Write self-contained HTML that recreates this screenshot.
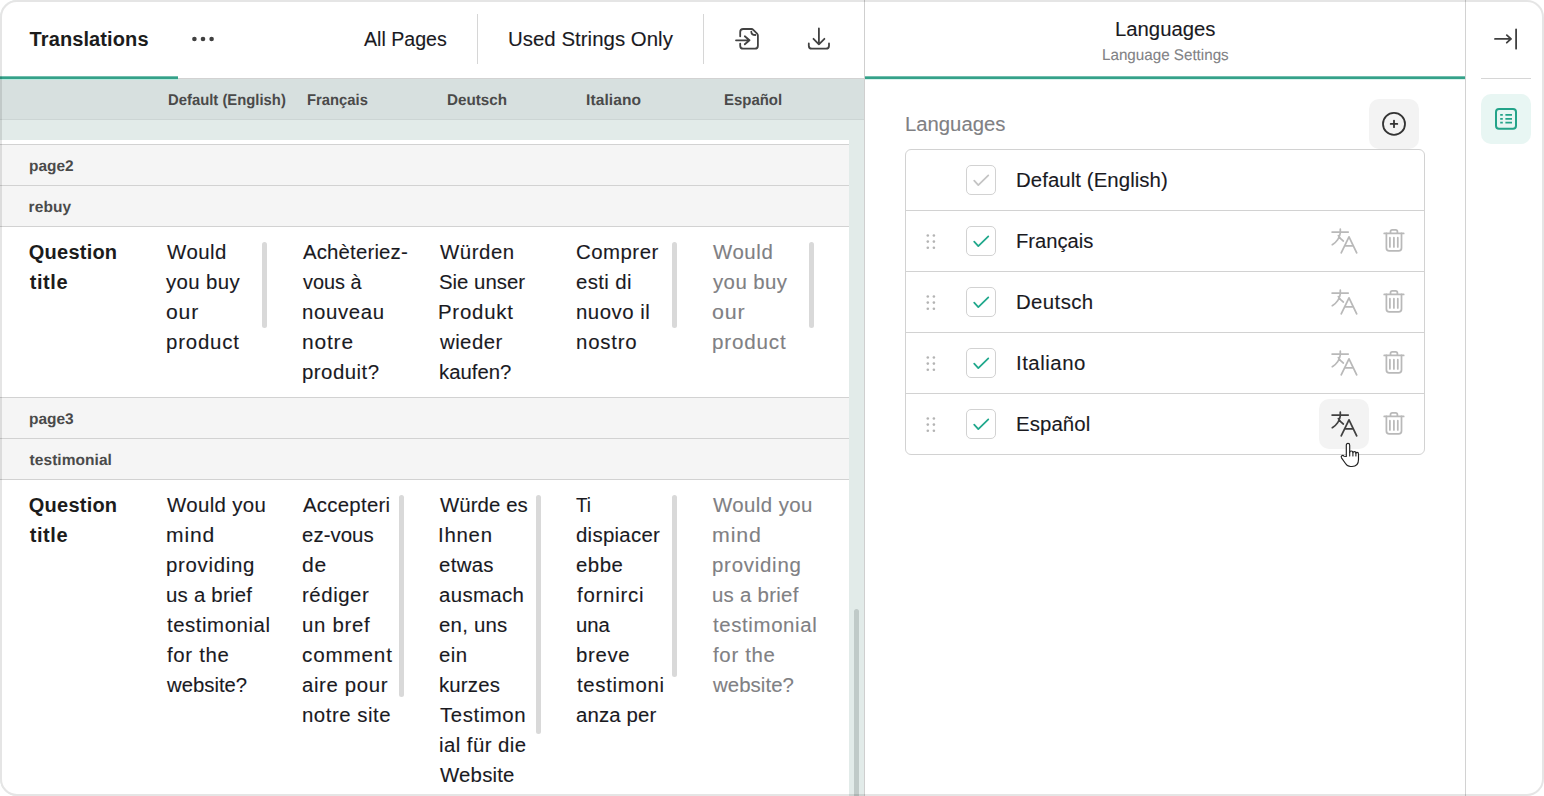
<!DOCTYPE html>
<html lang="en">
<head>
<meta charset="utf-8">
<title>Translations</title>
<style>
*{box-sizing:border-box;margin:0;padding:0}
html,body{width:1544px;height:796px;overflow:hidden;background:#fff}
body{font-family:"Liberation Sans",sans-serif;color:#1a1a1f;font-size:20px;line-height:30px}
#app{position:absolute;left:0;top:0;width:1544px;height:796px;border-radius:17px;overflow:hidden;background:#fff}
#frame{position:absolute;left:0;top:0;width:1544px;height:796px;border:2px solid rgba(0,0,0,.1);border-radius:17px;z-index:50;pointer-events:none}
.abs{position:absolute}
svg{position:absolute;overflow:visible}
/* text cells: every line is a span */
.c{position:absolute;white-space:nowrap}
.c .l{display:block;transform-origin:0 50%}
.s20{font-size:20px;line-height:30px;-webkit-text-stroke:.12px}
.s20 .l{height:30px}
.s15{font-size:15.5px;line-height:20px;-webkit-text-stroke:.1px;text-rendering:geometricPrecision}
.s15 .l{height:20px}
.sbd{font-weight:bold;color:#1c1c1c;-webkit-text-stroke:0}
.th{font-weight:bold;color:#4a4a4a;-webkit-text-stroke:0}
.ph{color:#808083}
.sub{color:#828285}
/* left panel */
#left{position:absolute;left:0;top:0;width:864px;height:796px;background:#e2ebe9;overflow:hidden}
#lhead{position:absolute;left:0;top:0;width:864px;height:78px;background:#fff}
#hline{position:absolute;left:0;top:78px;width:864px;height:1px;background:#d2d2d2}
.tabline{position:absolute;top:76px;height:3px;background:#35a189;border-top:1px solid #72bfae;z-index:3}
.tabfringe{position:absolute;top:79px;height:1px;background:#b9eadf;z-index:3}
.vsep{position:absolute;top:14px;width:1px;height:50px;background:#d6d6d6}
#thead{position:absolute;left:0;top:79px;width:864px;height:41px;background:#d7e0df;border-bottom:1px solid #ccd5d4}
#tbody{position:absolute;left:0;top:140px;width:849px;height:660px;background:#fff}
.grp{position:absolute;left:0;width:849px;height:41px;background:#f5f5f5;border-top:1px solid #d2d2d2}
.rowline{position:absolute;left:0;width:849px;height:1px;background:#d2d2d2}
.sb{position:absolute;width:5px;border-radius:2.5px;background:#d9d9d9}
#mainsb{position:absolute;left:854px;top:609px;width:5px;height:200px;background:#c0cac8;border-radius:2.5px}
#vdiv1{position:absolute;left:864px;top:0;width:1px;height:796px;background:#cfcfcf}
/* right panel */
#right{position:absolute;left:865px;top:0;width:600px;height:796px;background:#fff}
#vdiv2{position:absolute;left:1465px;top:0;width:1px;height:796px;background:#d2d2d2}
#list{position:absolute;left:905px;top:149px;width:520px;height:306px;border:1px solid #d2d2d2;border-radius:6px;background:#fff}
.li{position:absolute;left:0;width:518px;height:61px}
.li + .li{border-top:1px solid #d2d2d2}
.cb{position:absolute;left:60px;width:30px;height:30px;border:1px solid #d2d2d2;border-radius:5px;background:#fff}
.btn{position:absolute;width:50px;height:50px;border-radius:10px;background:#f3f3f3}
</style>
</head>
<body>
<div id="app">
  <div id="left">
    <div id="lhead">
      <div class="c s20 sbd" style="left:28px;top:24px"><span class="l" style="margin-left:1.6px;letter-spacing:0.1px;transform:scaleX(1)">Translations</span></div>
      <div class="c s20" style="left:363px;top:24px"><span class="l" style="margin-left:1.1px;transform:scaleX(0.98)">All Pages</span></div>
      <div class="c s20" style="left:508px;top:24px"><span class="l" style="margin-left:-0.02px;letter-spacing:0.03px;transform:scaleX(1.02)">Used Strings Only</span></div>
      <svg style="left:191px;top:34px" width="24" height="10" viewBox="0 0 24 10"><circle cx="3.4" cy="5" r="2.3" fill="#404040"/><circle cx="12" cy="5" r="2.3" fill="#404040"/><circle cx="20.6" cy="5" r="2.3" fill="#404040"/></svg>
      <div class="vsep" style="left:477px"></div>
      <div class="vsep" style="left:703px"></div>
      <svg style="left:0;top:0" width="864" height="78" viewBox="0 0 864 78" fill="none" stroke="#424242" stroke-width="1.800" stroke-linecap="round" stroke-linejoin="round">
        <path d="M740.200 36.300V32Q740.200 29 743.200 29H751.500Q752.500 29 753.300 29.800L757.100 33.600Q757.900 34.400 757.900 35.500V45.700Q757.900 48.700 754.900 48.700H743.200Q740.200 48.700 740.200 45.700V43.600"/>
        <path d="M751.300 31.700Q751.300 35 755.400 35"/>
        <path d="M736 40.300H749.500M744.800 36.300L749.500 40.300L744.800 44.300"/>
        <path d="M818.900 28.500V44.300M813.500 38.800L818.900 44.300L824.400 38.800"/>
        <path d="M808.800 43.500V45.700Q808.800 48.700 811.800 48.700H826Q829 48.700 829 45.700V43.500"/>
      </svg>
    </div>
    <div id="hline"></div>
    <div class="tabline" style="left:0;width:178px"></div>
    <div class="tabfringe" style="left:0;width:178px"></div>
    <div id="thead">
      <div class="c s15 th" style="left:168px;top:12px"><span class="l" style="margin-left:0.34px;transform:scaleX(0.957)">Default (English)</span></div>
      <div class="c s15 th" style="left:307px;top:12px"><span class="l" style="margin-left:0.05px;transform:scaleX(0.955)">Français</span></div>
      <div class="c s15 th" style="left:446px;top:12px"><span class="l" style="margin-left:0.52px;transform:scaleX(0.981)">Deutsch</span></div>
      <div class="c s15 th" style="left:585px;top:12px"><span class="l" style="margin-left:0.5px;letter-spacing:0.11px;transform:scaleX(1.001)">Italiano</span></div>
      <div class="c s15 th" style="left:724px;top:12px"><span class="l" style="margin-left:0.34px;transform:scaleX(0.964)">Español</span></div>
    </div>
    <div id="tbody">
      <div class="grp" style="top:4px"></div>
      <div class="grp" style="top:45px"></div>
      <div class="rowline" style="top:86px"></div>
      <div class="c s15 th" style="left:28px;top:17px"><span class="l" style="margin-left:0.6px;transform:scaleX(0.995)">page2</span></div>
      <div class="c s15 th" style="left:28px;top:58px"><span class="l" style="margin-left:0.6px;letter-spacing:0.1px;transform:scaleX(1)">rebuy</span></div>
      <div class="c s20 sbd" style="left:28px;top:97px"><span class="l" style="margin-left:0.8px;letter-spacing:0.23px;transform:scaleX(1)">Question</span><span class="l" style="margin-left:1.8px;letter-spacing:0.55px;transform:scaleX(1)">title</span></div>
      <div class="c s20" style="left:165px;top:97px"><span class="l" style="margin-left:1.6px;letter-spacing:0.49px;transform:scaleX(1.02)">Would</span><span class="l" style="margin-left:1.2px;letter-spacing:0.36px;transform:scaleX(1.02)">you buy</span><span class="l" style="margin-left:0.54px;letter-spacing:0.8px;transform:scaleX(1.057)">our</span><span class="l" style="margin-left:0.78px;letter-spacing:0.8px;transform:scaleX(1.02)">product</span></div>
      <div class="c s20" style="left:301px;top:97px"><span class="l" style="margin-left:1.7px;letter-spacing:0.15px;transform:scaleX(1.02)">Achèteriez-</span><span class="l" style="margin-left:1.9px;transform:scaleX(0.993)">vous à</span><span class="l" style="margin-left:1.28px;letter-spacing:0.61px;transform:scaleX(1.02)">nouveau</span><span class="l" style="margin-left:1.25px;letter-spacing:0.8px;transform:scaleX(1.047)">notre</span><span class="l" style="margin-left:1.28px;letter-spacing:0.47px;transform:scaleX(1.02)">produit?</span></div>
      <div class="c s20" style="left:438px;top:97px"><span class="l" style="margin-left:1.9px;letter-spacing:0.53px;transform:scaleX(1.02)">Würden</span><span class="l" style="margin-left:0.88px;transform:scaleX(1.019)">Sie unser</span><span class="l" style="margin-left:0.46px;letter-spacing:0.75px;transform:scaleX(1.02)">Produkt</span><span class="l" style="margin-left:1.7px;letter-spacing:0.42px;transform:scaleX(1.02)">wieder</span><span class="l" style="margin-left:1.28px;transform:scaleX(1.016)">kaufen?</span></div>
      <div class="c s20" style="left:575px;top:97px"><span class="l" style="margin-left:0.78px;letter-spacing:0.48px;transform:scaleX(1.02)">Comprer</span><span class="l" style="margin-left:0.78px;letter-spacing:0.36px;transform:scaleX(1.02)">esti di</span><span class="l" style="margin-left:1.08px;letter-spacing:0.48px;transform:scaleX(1.02)">nuovo il</span><span class="l" style="margin-left:1.08px;letter-spacing:0.77px;transform:scaleX(1.02)">nostro</span></div>
      <div class="c s20 ph" style="left:711px;top:97px"><span class="l" style="margin-left:1.9px;letter-spacing:0.56px;transform:scaleX(1.02)">Would</span><span class="l" style="margin-left:1.5px;letter-spacing:0.41px;transform:scaleX(1.02)">you buy</span><span class="l" style="margin-left:0.93px;letter-spacing:0.8px;transform:scaleX(1.071)">our</span><span class="l" style="margin-left:1.07px;letter-spacing:0.8px;transform:scaleX(1.03)">product</span></div>
      <div class="sb" style="left:262px;top:102px;height:86px"></div>
      <div class="sb" style="left:672px;top:102px;height:86px"></div>
      <div class="sb" style="left:809px;top:102px;height:86px"></div>
      <div class="grp" style="top:257px"></div>
      <div class="grp" style="top:298px"></div>
      <div class="rowline" style="top:339px"></div>
      <div class="c s15 th" style="left:28px;top:270px"><span class="l" style="margin-left:0.6px;transform:scaleX(0.998)">page3</span></div>
      <div class="c s15 th" style="left:28px;top:311px"><span class="l" style="margin-left:1.6px;letter-spacing:0.05px;transform:scaleX(1)">testimonial</span></div>
      <div class="c s20 sbd" style="left:28px;top:350px"><span class="l" style="margin-left:0.8px;letter-spacing:0.23px;transform:scaleX(1)">Question</span><span class="l" style="margin-left:1.8px;letter-spacing:0.55px;transform:scaleX(1)">title</span></div>
      <div class="c s20" style="left:165px;top:350px"><span class="l" style="margin-left:1.6px;letter-spacing:0.35px;transform:scaleX(1.02)">Would you</span><span class="l" style="margin-left:0.85px;letter-spacing:0.8px;transform:scaleX(1.053)">mind</span><span class="l" style="margin-left:0.88px;letter-spacing:0.69px;transform:scaleX(1.02)">providing</span><span class="l" style="margin-left:0.88px;letter-spacing:0.22px;transform:scaleX(1.02)">us a brief</span><span class="l" style="margin-left:1.5px;letter-spacing:0.53px;transform:scaleX(1.02)">testimonial</span><span class="l" style="margin-left:1.6px;letter-spacing:0.65px;transform:scaleX(1.02)">for the</span><span class="l" style="margin-left:1.5px;transform:scaleX(1.015)">website?</span></div>
      <div class="c s20" style="left:301px;top:350px"><span class="l" style="margin-left:1.7px;letter-spacing:0.25px;transform:scaleX(1.02)">Accepteri</span><span class="l" style="margin-left:1.28px;letter-spacing:0.04px;transform:scaleX(1.02)">ez-vous</span><span class="l" style="margin-left:1.24px;letter-spacing:0.8px;transform:scaleX(1.058)">de</span><span class="l" style="margin-left:1.28px;letter-spacing:0.54px;transform:scaleX(1.02)">rédiger</span><span class="l" style="margin-left:1.28px;letter-spacing:0.68px;transform:scaleX(1.02)">un bref</span><span class="l" style="margin-left:0.67px;letter-spacing:0.8px;transform:scaleX(1.033)">comment</span><span class="l" style="margin-left:0.88px;letter-spacing:0.61px;transform:scaleX(1.02)">aire pour</span><span class="l" style="margin-left:1.28px;letter-spacing:0.5px;transform:scaleX(1.02)">notre site</span></div>
      <div class="c s20" style="left:438px;top:350px"><span class="l" style="margin-left:1.9px;letter-spacing:0.07px;transform:scaleX(1.02)">Würde es</span><span class="l" style="margin-left:0.46px;letter-spacing:0.73px;transform:scaleX(1.02)">Ihnen</span><span class="l" style="margin-left:0.88px;letter-spacing:0.31px;transform:scaleX(1.02)">etwas</span><span class="l" style="margin-left:0.88px;letter-spacing:0.35px;transform:scaleX(1.02)">ausmach</span><span class="l" style="margin-left:0.88px;letter-spacing:0.22px;transform:scaleX(1.02)">en, uns</span><span class="l" style="margin-left:0.88px;letter-spacing:0.44px;transform:scaleX(1.02)">ein</span><span class="l" style="margin-left:1.28px;letter-spacing:0.15px;transform:scaleX(1.02)">kurzes</span><span class="l" style="margin-left:1.9px;letter-spacing:0.56px;transform:scaleX(1.02)">Testimon</span><span class="l" style="margin-left:1.08px;letter-spacing:0.43px;transform:scaleX(1.02)">ial für die</span><span class="l" style="margin-left:1.9px;letter-spacing:0.18px;transform:scaleX(1.02)">Website</span></div>
      <div class="c s20" style="left:575px;top:350px"><span class="l" style="margin-left:1.4px;transform:scaleX(0.94)">Ti</span><span class="l" style="margin-left:0.78px;letter-spacing:0.27px;transform:scaleX(1.02)">dispiacer</span><span class="l" style="margin-left:0.78px;letter-spacing:0.5px;transform:scaleX(1.02)">ebbe</span><span class="l" style="margin-left:1.6px;letter-spacing:0.73px;transform:scaleX(1.02)">fornirci</span><span class="l" style="margin-left:0.98px;transform:scaleX(1.015)">una</span><span class="l" style="margin-left:0.58px;letter-spacing:0.65px;transform:scaleX(1.02)">breve</span><span class="l" style="margin-left:1.8px;letter-spacing:0.66px;transform:scaleX(1.02)">testimoni</span><span class="l" style="margin-left:0.58px;letter-spacing:0.11px;transform:scaleX(1.02)">anza per</span></div>
      <div class="c s20 ph" style="left:711px;top:350px"><span class="l" style="margin-left:1.9px;letter-spacing:0.41px;transform:scaleX(1.02)">Would you</span><span class="l" style="margin-left:1.03px;letter-spacing:0.8px;transform:scaleX(1.067)">mind</span><span class="l" style="margin-left:1.08px;letter-spacing:0.74px;transform:scaleX(1.02)">providing</span><span class="l" style="margin-left:1.08px;letter-spacing:0.26px;transform:scaleX(1.02)">us a brief</span><span class="l" style="margin-left:1.7px;letter-spacing:0.61px;transform:scaleX(1.02)">testimonial</span><span class="l" style="margin-left:2.2px;letter-spacing:0.67px;transform:scaleX(1.02)">for the</span><span class="l" style="margin-left:2px;letter-spacing:0.05px;transform:scaleX(1.02)">website?</span></div>
      <div class="sb" style="left:399px;top:355px;height:202px"></div>
      <div class="sb" style="left:536px;top:355px;height:239px"></div>
      <div class="sb" style="left:672px;top:355px;height:182px"></div>
    </div>
    <div id="mainsb"></div>
  </div>
  <div id="vdiv1"></div>
  <div id="right"></div>
  <div class="tabline" style="left:865px;width:600px"></div>
  <div class="tabfringe" style="left:865px;width:600px;background:#d9f3ed"></div>
  <div class="c s20" style="left:1115px;top:14px"><span class="l" style="margin-left:-0.23px;transform:scaleX(1.015)">Languages</span></div>
  <div class="c s15 sub" style="left:1101px;top:46px"><span class="l" style="margin-left:0.62px;transform:scaleX(0.98)">Language Settings</span></div>
  <div class="c s20 ph" style="left:905px;top:109px"><span class="l" style="margin-left:-0.23px;transform:scaleX(1.014)">Languages</span></div>
  <div class="btn" style="left:1369px;top:99px"></div>
  <div id="list">
    <div class="li" style="top:0"><div class="cb" style="top:15px"></div></div>
    <div class="li" style="top:60px"><div class="cb" style="top:15px"></div></div>
    <div class="li" style="top:121px"><div class="cb" style="top:15px"></div></div>
    <div class="li" style="top:182px"><div class="cb" style="top:15px"></div></div>
    <div class="li" style="top:243px"><div class="cb" style="top:15px"></div></div>
  </div>
  <div class="c s20" style="left:1016px;top:165px"><span class="l" style="margin-left:-0.34px;letter-spacing:0.06px;transform:scaleX(1.02)">Default (English)</span></div>
  <div class="c s20" style="left:1016px;top:226px"><span class="l" style="margin-left:-0.32px;transform:scaleX(1.009)">Français</span></div>
  <div class="c s20" style="left:1016px;top:287px"><span class="l" style="margin-left:-0.34px;letter-spacing:0.38px;transform:scaleX(1.02)">Deutsch</span></div>
  <div class="c s20" style="left:1016px;top:348px"><span class="l" style="margin-left:-0.34px;letter-spacing:0.5px;transform:scaleX(1.02)">Italiano</span></div>
  <div class="c s20" style="left:1016px;top:409px"><span class="l" style="margin-left:-0.34px;letter-spacing:0.08px;transform:scaleX(1.02)">Español</span></div>
  <div class="btn" style="left:1319px;top:399px"></div>
  <svg style="left:0;top:0" width="1544" height="796" viewBox="0 0 1544 796" fill="none" stroke-width="1.750" stroke-linecap="round" stroke-linejoin="round">
    <g stroke="#333" stroke-width="1.800"><circle cx="1394" cy="123.900" r="11"/><path d="M1394 120.600V127.200M1390.700 123.900H1397.300"/></g>
    <path stroke="#c4c4c4" d="M974.200 180.7L978.300 185.1L988.300 175.4"/>
    <g fill="#b4b4b4" stroke="none"><circle cx="927.8" cy="235.5" r="1.3"/><circle cx="933.9" cy="235.5" r="1.3"/><circle cx="927.8" cy="241.6" r="1.3"/><circle cx="933.9" cy="241.6" r="1.3"/><circle cx="927.8" cy="247.7" r="1.3"/><circle cx="933.9" cy="247.7" r="1.3"/></g>
    <path stroke="#20a88c" d="M974.200 241.7L978.300 246.1L988.300 236.4"/>
    <g stroke="#b9b9b9"><path d="M1332.100 232H1348.200M1340.300 229.2V232M1340.500 232Q1339.300 240.5 1332.300 244.7M1338.400 235.6Q1340 238.6 1343.300 241"/><path d="M1341.200 252.8L1349 236.8L1356.700 252.8M1344.800 245.9H1353.200"/></g>
    <g stroke="#b9b9b9"><path d="M1384.200 233.4H1403.700M1390.500 233.4V231.6Q1390.500 229.8 1392.300 229.8H1395.600Q1397.400 229.8 1397.400 231.6V233.4"/><path d="M1386.400 233.4V248Q1386.400 250.9 1389.300 250.9H1398.600Q1401.500 250.9 1401.500 248V233.4M1389.900 237.7V246.9M1393.900 237.7V246.9M1397.800 237.7V246.9"/></g>
    <g fill="#b4b4b4" stroke="none"><circle cx="927.8" cy="296.5" r="1.3"/><circle cx="933.9" cy="296.5" r="1.3"/><circle cx="927.8" cy="302.6" r="1.3"/><circle cx="933.9" cy="302.6" r="1.3"/><circle cx="927.8" cy="308.7" r="1.3"/><circle cx="933.9" cy="308.7" r="1.3"/></g>
    <path stroke="#20a88c" d="M974.200 302.7L978.300 307.1L988.300 297.4"/>
    <g stroke="#b9b9b9"><path d="M1332.100 293H1348.200M1340.300 290.2V293M1340.500 293Q1339.300 301.5 1332.300 305.7M1338.400 296.6Q1340 299.6 1343.300 302"/><path d="M1341.200 313.8L1349 297.8L1356.700 313.8M1344.800 306.9H1353.200"/></g>
    <g stroke="#b9b9b9"><path d="M1384.200 294.4H1403.700M1390.500 294.4V292.6Q1390.500 290.8 1392.300 290.8H1395.600Q1397.400 290.8 1397.400 292.6V294.4"/><path d="M1386.400 294.4V309Q1386.400 311.9 1389.300 311.9H1398.600Q1401.500 311.9 1401.500 309V294.4M1389.900 298.7V307.9M1393.900 298.7V307.9M1397.800 298.7V307.9"/></g>
    <g fill="#b4b4b4" stroke="none"><circle cx="927.8" cy="357.5" r="1.3"/><circle cx="933.9" cy="357.5" r="1.3"/><circle cx="927.8" cy="363.6" r="1.3"/><circle cx="933.9" cy="363.6" r="1.3"/><circle cx="927.8" cy="369.7" r="1.3"/><circle cx="933.9" cy="369.7" r="1.3"/></g>
    <path stroke="#20a88c" d="M974.200 363.7L978.300 368.1L988.300 358.4"/>
    <g stroke="#b9b9b9"><path d="M1332.100 354H1348.200M1340.300 351.2V354M1340.500 354Q1339.300 362.5 1332.300 366.7M1338.400 357.6Q1340 360.6 1343.300 363"/><path d="M1341.200 374.8L1349 358.8L1356.700 374.8M1344.800 367.9H1353.200"/></g>
    <g stroke="#b9b9b9"><path d="M1384.200 355.4H1403.700M1390.500 355.4V353.6Q1390.500 351.8 1392.300 351.8H1395.600Q1397.400 351.8 1397.400 353.6V355.4"/><path d="M1386.400 355.4V370Q1386.400 372.9 1389.300 372.9H1398.600Q1401.500 372.9 1401.500 370V355.4M1389.900 359.7V368.9M1393.900 359.7V368.9M1397.800 359.7V368.9"/></g>
    <g fill="#b4b4b4" stroke="none"><circle cx="927.8" cy="418.5" r="1.3"/><circle cx="933.9" cy="418.5" r="1.3"/><circle cx="927.8" cy="424.6" r="1.3"/><circle cx="933.9" cy="424.6" r="1.3"/><circle cx="927.8" cy="430.7" r="1.3"/><circle cx="933.9" cy="430.7" r="1.3"/></g>
    <path stroke="#20a88c" d="M974.200 424.7L978.300 429.1L988.300 419.4"/>
    <g stroke="#404040"><path d="M1332.100 415H1348.200M1340.300 412.2V415M1340.500 415Q1339.300 423.5 1332.300 427.7M1338.400 418.6Q1340 421.6 1343.300 424"/><path d="M1341.200 435.8L1349 419.8L1356.700 435.8M1344.800 428.9H1353.200"/></g>
    <g stroke="#b9b9b9"><path d="M1384.200 416.4H1403.700M1390.500 416.4V414.6Q1390.500 412.8 1392.300 412.8H1395.600Q1397.400 412.8 1397.400 414.6V416.4"/><path d="M1386.400 416.4V431Q1386.400 433.9 1389.300 433.9H1398.600Q1401.500 433.9 1401.500 431V416.4M1389.900 420.7V429.9M1393.900 420.7V429.9M1397.800 420.7V429.9"/></g>
  </svg>
  <svg style="left:1340.300px;top:442px;z-index:60" width="20" height="26" viewBox="0 0 20 26" stroke-linejoin="round" stroke-linecap="round"><path d="M6.300 14.500V3.200Q6.300 1.300 8 1.300Q9.700 1.300 9.700 3.200V10.300Q9.700 9 11.300 9Q12.900 9 12.900 10.700Q12.900 9.600 14.400 9.600Q15.900 9.600 15.900 11.300Q15.900 10.400 17.200 10.400Q18.500 10.400 18.500 12.200V17.500Q18.500 24.500 12 24.500H10.500Q7.500 24.500 5.500 21.500L1.500 15.800Q0.700 14.500 1.800 13.700Q2.900 13 4 14.200Z" fill="#fff" stroke="#222" stroke-width="1.150"/><path d="M9.700 10.300V14M12.900 10.700V14M15.900 11.300V14" fill="none" stroke="#222" stroke-width="1.100"/></svg>
  <div id="vdiv2"></div>
  <div id="bar">
    <div class="abs" style="left:1481px;top:78px;width:50px;height:1px;background:#d6d6d6"></div>
    <div class="abs" style="left:1481px;top:94px;width:50px;height:50px;border-radius:10px;background:#e8f6f3"></div>
    <svg style="left:0;top:0" width="1544" height="160" viewBox="0 0 1544 160" fill="none" stroke-width="2" stroke-linecap="round" stroke-linejoin="round">
      <path stroke="#404040" stroke-width="1.800" d="M1495 38.900H1511M1506.800 35.100L1511 38.900L1506.800 42.700M1516.100 29.300V48.700"/>
      <rect stroke="#23a389" x="1496" y="109" width="20" height="19.700" rx="3"/>
      <path stroke="#23a389" stroke-width="1.800" stroke-linecap="butt" d="M1500.200 114.900H1502.800M1505.400 114.900H1512M1500.200 118.800H1502.800M1505.400 118.800H1512M1500.200 122.600H1502.800M1505.400 122.600H1512"/>
    </svg>
  </div>
</div>
<div id="frame"></div>
</body>
</html>
